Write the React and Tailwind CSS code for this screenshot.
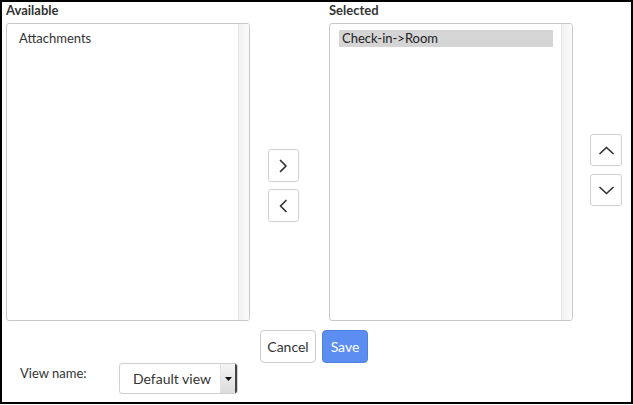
import React from 'react';

const Chevron = ({ dir }) => {
  const paths = {
    right: 'M1.5 1.5 L7 7 L1.5 12.5',
    left: 'M7 1.5 L1.5 7 L7 12.5',
    up: 'M1 7.5 L7.5 1.5 L14 7.5',
    down: 'M1 1.5 L7.5 7.5 L14 1.5',
  };
  const vertical = dir === 'up' || dir === 'down';
  return (
    <svg
      width={vertical ? 15 : 9}
      height={vertical ? 9 : 14}
      viewBox={vertical ? '0 0 15 9' : '0 0 9 14'}
      fill="none"
      stroke="#333"
      strokeWidth="1.7"
      strokeLinecap="round"
      strokeLinejoin="round"
    >
      <path d={paths[dir]} />
    </svg>
  );
};

const ArrowButton = ({ dir, className = '' }) => (
  <button className={`flex items-center justify-center bg-white border border-[#cfcfcf] rounded-[3px] ${className}`}>
    <Chevron dir={dir} />
  </button>
);

const ListBox = ({ items, selected }) => (
  <div className="flex w-[244px] h-[298px] border border-[#c9c9c9] rounded-[3px] bg-white overflow-hidden">
    <div className="flex-1 pt-[6px] pl-[9px] pr-[8px]">
      {items.map((it) => (
        <div
          key={it}
          className={`h-[17px] leading-[17px] px-[3px] ${selected === it ? 'bg-[#d5d5d5] text-[#222]' : ''}`}
        >
          {it}
        </div>
      ))}
    </div>
    <div className="w-[11px] border-l border-[#e4e4e4] bg-gradient-to-r from-[#f2f2f2] to-[#fafafa]" />
  </div>
);

export default function App() {
  return (
    <div className="w-[633px] h-[404px] border-2 border-black bg-white text-[13px] text-[#333] font-['Lato','Liberation_Sans',sans-serif] flex flex-col">
      <div className="flex pl-[4px]">
        <div className="flex flex-col">
          <div className="h-[21px] leading-[16px] font-bold text-[#333]">Available</div>
          <ListBox items={['Attachments']} />
        </div>
        <div className="flex flex-col gap-[7px] pt-[147px] ml-[18px]">
          <ArrowButton dir="right" className="w-[31px] h-[33px]" />
          <ArrowButton dir="left" className="w-[31px] h-[33px]" />
        </div>
        <div className="flex flex-col ml-[30px]">
          <div className="h-[21px] leading-[16px] font-bold text-[#333]">Selected</div>
          <ListBox items={['Check-in->Room']} selected="Check-in->Room" />
        </div>
        <div className="flex flex-col gap-[8px] pt-[132px] ml-[17px]">
          <ArrowButton dir="up" className="w-[32px] h-[32px]" />
          <ArrowButton dir="down" className="w-[32px] h-[32px]" />
        </div>
      </div>
      <div className="flex gap-[6px] mt-[9px] ml-[258px]">
        <button className="w-[56px] h-[33px] bg-white border border-[#cccccc] rounded-[4px] text-[14px] text-[#333]">
          Cancel
        </button>
        <button className="w-[46px] h-[33px] bg-[#5b8ef0] border border-[#4f80e0] rounded-[4px] text-[14px] text-white">
          Save
        </button>
      </div>
      <div className="flex items-start ml-[18px]">
        <div className="w-[99px] pt-[2px] leading-[16px]">View name:</div>
        <div className="flex w-[119px] h-[31px] border border-[#cfcfcf] rounded-[3px] bg-white overflow-hidden">
          <div className="flex-1 flex items-center pl-[13px] text-[14px]">Default view</div>
          <div className="w-[17px] flex items-center justify-center bg-gradient-to-b from-[#f4f4f4] to-[#dcdcdc] border-l border-[#e2e2e2] border-r-2 border-r-[#444]">
            <svg width="7" height="4" viewBox="0 0 7 4">
              <path d="M0 0 L7 0 L3.5 4 Z" fill="#111" />
            </svg>
          </div>
        </div>
      </div>
    </div>
  );
}
